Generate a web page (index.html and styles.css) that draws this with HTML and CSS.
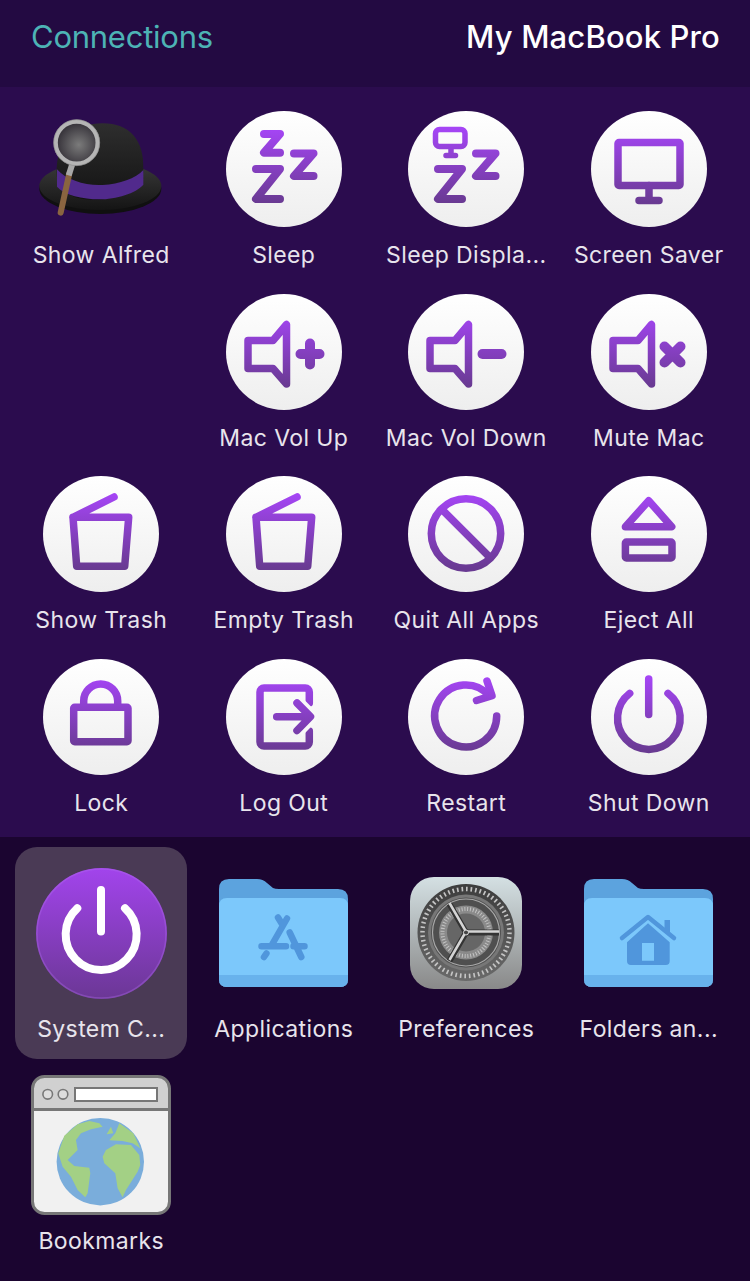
FILE: index.html
```html
<!DOCTYPE html>
<html lang="en">
<head>
    <meta charset="UTF-8">
    <meta name="viewport" content="width=device-width, initial-scale=1.0">
    <title>Alfred Remote</title>
    <link rel="stylesheet" href="styles.css">
</head>
<body>
    <svg class="defs" width="0" height="0">
        <defs>
            <linearGradient id="ink" gradientUnits="userSpaceOnUse" x1="0" y1="18" x2="0" y2="92">
                <stop offset="0" stop-color="#a545f5"/>
                <stop offset="1" stop-color="#693a92"/>
            </linearGradient>
            <linearGradient id="sysBg" x1="0" y1="0" x2="0" y2="1">
                <stop offset="0" stop-color="#a244ec"/>
                <stop offset="1" stop-color="#6b3795"/>
            </linearGradient>
            <linearGradient id="prefBg" x1="0" y1="0" x2="0" y2="1">
                <stop offset="0" stop-color="#d4e0e3"/>
                <stop offset="1" stop-color="#898989"/>
            </linearGradient>
            <linearGradient id="gearBg" x1="0" y1="0" x2="0" y2="1">
                <stop offset="0" stop-color="#3c3c3c"/>
                <stop offset="1" stop-color="#6a6a6a"/>
            </linearGradient>
            <linearGradient id="brim" x1="0" y1="0" x2="0" y2="1">
                <stop offset="0" stop-color="#3b3b3b"/>
                <stop offset="1" stop-color="#141414"/>
            </linearGradient>
            <linearGradient id="crown" x1="0" y1="0" x2="0" y2="1">
                <stop offset="0" stop-color="#2e2e2e"/>
                <stop offset="1" stop-color="#131313"/>
            </linearGradient>
            <radialGradient id="lens" cx="0.55" cy="0.55" r="0.6">
                <stop offset="0" stop-color="#7b7b7b"/>
                <stop offset="1" stop-color="#2c2830"/>
            </radialGradient>
            <g id="bigZ"><path d="M30 58H54L30 88H54"/></g>
            <g id="sideZ"><path d="M68 42.5H87.5L68 65H87.5"/></g>
            <g id="speaker"><path d="M22 46.5H47L60.5 30.5V90L47 74.5H22Z"/></g>
            <g id="trash"><path d="M71 21L30 41.3H85.7L81.7 90.3H33.7L30 41.3"/></g>
            <g id="folderBase">
                <path fill="#5ca3de" d="M0 10Q0 0 10 0H38Q44 0 48 4L54 9Q56 10 60 10H119Q129 10 129 20V90H0Z"/>
                <path fill="#7cc8fb" d="M0 27Q0 19 8 19H121Q129 19 129 27V100Q129 108 121 108H8Q0 108 0 100Z"/>
                <path fill="#68b2ec" d="M0 96H129V100Q129 108 121 108H8Q0 108 0 100Z"/>
            </g>
        </defs>
    </svg>

    <header class="topbar">
        <span class="link">Connections</span>
        <span class="device">My MacBook Pro</span>
    </header>

    <section class="actions">
        <div class="cell">
            <svg class="hat" width="130" height="116" viewBox="0 0 390 348">
                <g transform="translate(-110 -63)">
                    <ellipse cx="303" cy="296" rx="183" ry="76" fill="#101010"/>
                    <ellipse cx="303" cy="288" rx="183" ry="72" fill="url(#brim)"/>
                    <path fill="url(#crown)" d="M172 250C170 150 230 100 310 100C390 100 436 150 432 240C434 300 340 330 285 330C220 330 172 305 172 250Z"/>
                    <path fill="#512a8c" d="M173 238C200 270 260 288 310 285C360 282 410 265 432 240V284C410 310 350 328 300 328C250 328 195 315 173 290Z"/>
                    <path stroke="#8a6540" stroke-width="18" stroke-linecap="round" fill="none" d="M210 250L184 368"/>
                    <path stroke="#a8a8a8" stroke-width="18" fill="none" d="M219 222L208 256"/>
                    <circle cx="232" cy="158" r="63" fill="url(#lens)" stroke="#b5b5b5" stroke-width="13"/>
                    <circle cx="232" cy="158" r="69" fill="none" stroke="#8c8c8c" stroke-width="2"/>
                </g>
            </svg>
            <span class="label">Show Alfred</span>
        </div>
        <div class="cell">
            <div class="round"><svg class="ico zed" viewBox="0 0 116 116">
                <path d="M38 23H54L38 41.7H54"/><use href="#sideZ"/><use href="#bigZ"/>
            </svg></div>
            <span class="label">Sleep</span>
        </div>
        <div class="cell">
            <div class="round"><svg class="ico zed" viewBox="0 0 116 116">
                <rect class="thin" x="27.5" y="18.5" width="29.5" height="17" rx="4"/>
                <path class="thin" d="M43 36V44.5M38 44.5H47.5"/>
                <use href="#sideZ"/><use href="#bigZ"/>
            </svg></div>
            <span class="label">Sleep Displa...</span>
        </div>
        <div class="cell">
            <div class="round"><svg class="ico" viewBox="0 0 116 116">
                <rect class="sq" x="27" y="31.5" width="62" height="43" rx="1"/>
                <path class="sq" d="M58 74.5V89.5M48 89.5H68"/>
            </svg></div>
            <span class="label">Screen Saver</span>
        </div>

        <div class="cell"></div>
        <div class="cell">
            <div class="round"><svg class="ico" viewBox="0 0 116 116">
                <use href="#speaker"/><path class="fat" d="M74.5 60H93.5M84 49.5V70.5"/>
            </svg></div>
            <span class="label">Mac Vol Up</span>
        </div>
        <div class="cell">
            <div class="round"><svg class="ico" viewBox="0 0 116 116">
                <use href="#speaker"/><path class="fat" d="M74.5 60H93.5"/>
            </svg></div>
            <span class="label">Mac Vol Down</span>
        </div>
        <div class="cell">
            <div class="round"><svg class="ico" viewBox="0 0 116 116">
                <use href="#speaker"/><path class="fat" d="M73.5 52.5L89.5 68.5M89.5 52.5L73.5 68.5"/>
            </svg></div>
            <span class="label">Mute Mac</span>
        </div>

        <div class="cell">
            <div class="round"><svg class="ico" viewBox="0 0 116 116"><use href="#trash"/></svg></div>
            <span class="label">Show Trash</span>
        </div>
        <div class="cell">
            <div class="round"><svg class="ico" viewBox="0 0 116 116"><use href="#trash"/></svg></div>
            <span class="label">Empty Trash</span>
        </div>
        <div class="cell">
            <div class="round"><svg class="ico" viewBox="0 0 116 116">
                <circle cx="58" cy="57.5" r="34.7"/>
                <path d="M34 33.5L82 81.5"/>
            </svg></div>
            <span class="label">Quit All Apps</span>
        </div>
        <div class="cell">
            <div class="round"><svg class="ico" viewBox="0 0 116 116">
                <path d="M57.7 24.7L80.7 50.7H34.4Z"/>
                <rect x="34.4" y="66" width="46.6" height="16" rx="1"/>
            </svg></div>
            <span class="label">Eject All</span>
        </div>

        <div class="cell">
            <div class="round"><svg class="ico" viewBox="0 0 116 116">
                <rect x="30.7" y="48.3" width="54.3" height="34.4" rx="1"/>
                <path d="M40.7 48V42A17 17 0 0 1 74.7 42V48"/>
            </svg></div>
            <span class="label">Lock</span>
        </div>
        <div class="cell">
            <div class="round"><svg class="ico" viewBox="0 0 116 116">
                <path d="M83.3 44V33A4 4 0 0 0 79.3 29H38A4 4 0 0 0 34 33V83A4 4 0 0 0 38 87H79.3A4 4 0 0 0 83.3 83V72"/>
                <path class="cut" d="M71 44L84.5 57.7L71 71.5"/>
                <path d="M50.7 57.7H83M71 44L84.5 57.7L71 71.5"/>
            </svg></div>
            <span class="label">Log Out</span>
        </div>
        <div class="cell">
            <div class="round"><svg class="ico" viewBox="0 0 116 116">
                <path d="M88.7 57A31 31 0 1 1 81 36.5"/>
                <path d="M79 22L84 36.7L68.5 41.5"/>
            </svg></div>
            <span class="label">Restart</span>
        </div>
        <div class="cell">
            <div class="round"><svg class="ico" viewBox="0 0 116 116">
                <path d="M57.7 20V55.5M38.7 34.4A31.3 31.3 0 1 0 77 34.4"/>
            </svg></div>
            <span class="label">Shut Down</span>
        </div>
    </section>

    <section class="folders">
        <div class="tile selected">
            <div class="tile-icon">
                <svg width="131" height="131" viewBox="0 0 131 131">
                    <circle cx="65.5" cy="65.5" r="65.5" fill="url(#sysBg)"/>
                    <circle cx="65.5" cy="65.5" r="64.5" fill="none" stroke="#b26cee" stroke-opacity=".35" stroke-width="1.5"/>
                    <path class="power" d="M65 22V63.5M41.3 40.3A35.5 35.5 0 1 0 89 40.3"/>
                </svg>
            </div>
            <span class="label">System C...</span>
        </div>
        <div class="tile">
            <div class="tile-icon">
                <svg width="129" height="108" viewBox="0 0 129 108">
                    <use href="#folderBase"/>
                    <path class="glyph" d="M68 39.5L52.5 66.5M59 38.5L63 45M70.7 53.5L82.3 78M74.5 67.3H85.5M42.5 67.3H67M47.4 74.5L45 78"/>
                </svg>
            </div>
            <span class="label">Applications</span>
        </div>
        <div class="tile">
            <div class="tile-icon">
                <svg width="112" height="112" viewBox="0 0 112 112">
                    <rect width="112" height="112" rx="24" fill="url(#prefBg)"/>
                    <circle cx="56" cy="55.5" r="48.5" fill="url(#gearBg)"/>
                    <circle class="ticks" cx="56" cy="55.5" r="43.5" pathLength="360" stroke-dasharray="2.2 3.8"/>
                    <circle cx="56" cy="55.5" r="38" fill="#777"/>
                    <circle cx="56" cy="55.5" r="35" fill="#4f4f4f"/>
                    <circle cx="56" cy="55.5" r="33.5" fill="none" stroke="#a8a8a8" stroke-width="1.2"/>
                    <circle cx="56" cy="55.5" r="27" fill="#8a8a8a"/>
                    <circle class="ticks small" cx="56" cy="55.5" r="23.5" pathLength="360" stroke-dasharray="2.4 4.6"/>
                    <circle cx="56" cy="55.5" r="19" fill="#666"/>
                    <path class="spoke shade" d="M56 55.5H89M56 55.5L39.5 27M56 55.5L39.5 84"/>
                    <path class="spoke" d="M56 54.5H89M56 54.5L39.5 26M56 54.5L39.5 83"/>
                    <circle cx="56" cy="55.5" r="2.5" fill="#444" stroke="#ddd"/>
                </svg>
            </div>
            <span class="label">Preferences</span>
        </div>
        <div class="tile">
            <div class="tile-icon">
                <svg width="129" height="108" viewBox="0 0 129 108">
                    <use href="#folderBase"/>
                    <path fill="#5096dc" d="M64 44.3L85.7 63.3V82Q85.7 86 81.7 86H47Q43 86 43 82V63.3ZM58 64V81.7H70V64Z" fill-rule="evenodd"/>
                    <path fill="none" stroke="#5096dc" stroke-width="4.5" stroke-linecap="round" stroke-linejoin="round" d="M38 59L64 38L90 59"/>
                    <rect x="80.5" y="41" width="5.5" height="13" fill="#5096dc"/>
                </svg>
            </div>
            <span class="label">Folders an...</span>
        </div>
        <div class="tile">
            <div class="tile-icon">
                <svg width="140" height="140" viewBox="0 0 140 140">
                    <rect x="1.5" y="1.5" width="137" height="137" rx="12" fill="#f1f1f1"/>
                    <path fill="#d0d0d0" d="M1.5 34V13.5A12 12 0 0 1 13.5 1.5H126.5A12 12 0 0 1 138.5 13.5V34Z"/>
                    <rect x="1.5" y="1.5" width="137" height="137" rx="12" fill="none" stroke="#777" stroke-width="3"/>
                    <path stroke="#777" stroke-width="3" d="M1 34.5H139"/>
                    <circle cx="16.7" cy="19.3" r="4.8" fill="#ddd" stroke="#777" stroke-width="1.6"/>
                    <circle cx="32" cy="19.3" r="4.8" fill="#ddd" stroke="#777" stroke-width="1.6"/>
                    <rect x="44" y="13" width="82" height="13" fill="#fff" stroke="#777" stroke-width="2"/>
                    <circle cx="69.3" cy="86.7" r="43.7" fill="#7aaddb"/>
                    <g fill="#a3d085" transform="translate(-21.7 -10) scale(.3333)">
                        <path d="M270 175L280 185L245 193L215 205L200 225L205 255L175 285L195 303L240 308L243 325L235 385L228 397L205 375L185 335L160 305L147 265L165 212L205 178L240 168Z"/>
                        <path d="M330 175L372 205L393 250L370 235L340 228L300 226L318 205Z"/>
                        <path d="M290 255L320 238L365 240L390 270L393 300L385 320L350 375L340 397L325 370L318 325L285 295L280 275Z"/>
                        <path d="M305 185L312 205L292 208Z"/>
                    </g>
                </svg>
            </div>
            <span class="label">Bookmarks</span>
        </div>
    </section>
</body>
</html>
```

FILE: styles.css
```css
* { box-sizing: border-box; }
html, body { margin: 0; padding: 0; }
body { width: 750px; height: 1281px; overflow: hidden; background: #1b0530; font-family: Inter, "Liberation Sans", sans-serif; }
.defs { display: block; height: 0; }

.topbar { height: 87px; padding: 0 30px 15px 31px; display: flex; justify-content: space-between; align-items: center; background: #230a42; font-size: 31px; }
.link { color: #4db3b5; letter-spacing: -.25px; }
.device { color: #fff; font-weight: 500; letter-spacing: .15px; }

.actions { height: 750px; padding: 24px 10px 12.5px; display: grid; grid-template-columns: repeat(4, 182.5px); grid-auto-rows: 166px; row-gap: 16.5px; background: #2b0c4e; }
.cell { display: flex; flex-direction: column; align-items: center; }
.hat { display: block; }
.round { width: 116px; height: 116px; flex: none; border-radius: 50%; background: linear-gradient(#fff, #eee); }
.label { margin-top: 13px; height: 30px; line-height: 30px; font-size: 23px; letter-spacing: .4px; color: #e8e4ec; white-space: nowrap; }

.ico { display: block; width: 116px; height: 116px; fill: none; stroke: url(#ink); stroke-width: 7.5; stroke-linecap: round; stroke-linejoin: round; }
.ico.zed { stroke-width: 8; }
.ico .thin { stroke-width: 5.5; }
.ico .sq { stroke-width: 7.5; }
.ico .fat { stroke-width: 10; }
.ico .cut { stroke: #f8f8f8; stroke-width: 15; stroke-linecap: butt; }

.folders { height: 444px; padding: 10px 10px; display: grid; grid-template-columns: repeat(4, 182.5px); grid-auto-rows: 212px; }
.tile { width: 172px; height: 212px; padding-top: 16px; justify-self: center; display: flex; flex-direction: column; align-items: center; border-radius: 22px; }
.tile.selected { background: #4a3a55; }
.tile-icon { height: 140px; flex: none; display: flex; align-items: center; justify-content: center; }
.tile-icon svg { display: block; }
.tile .label { margin-top: 11px; }

.power { fill: none; stroke: #fff; stroke-width: 8; stroke-linecap: round; }
.glyph { fill: none; stroke: #5096dc; stroke-width: 6.5; stroke-linecap: round; }
.ticks { fill: none; stroke: #c4c4c4; stroke-width: 4.5; }
.ticks.small { stroke: #c4c4c4; stroke-width: 4; }
.spoke { fill: none; stroke: #d4d4d4; stroke-width: 2.5; }
.spoke.shade { stroke: #333; stroke-width: 6; }
```
